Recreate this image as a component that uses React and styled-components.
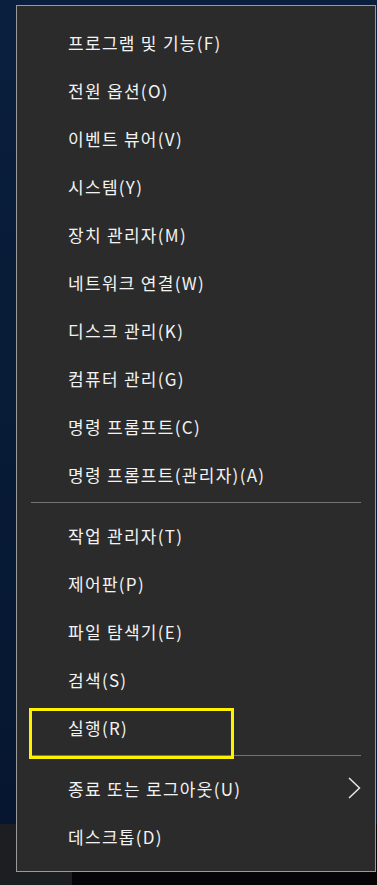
import React from "react"
import styled, { createGlobalStyle } from "styled-components"

const Global = createGlobalStyle`
  html, body {
    margin: 0;
    padding: 0;
    background: #050508;
  }
`

const Screen = styled.div`
  position: relative;
  width: 377px;
  height: 885px;
  overflow: hidden;
  display: flex;
  flex-direction: column;
  font-family: "Noto Sans CJK KR", "Noto Sans", sans-serif;
`

const Desktop = styled.div`
  flex: 1;
  background: linear-gradient(180deg, #0a1f3d 0%, #071a35 60%, #061630 100%);
`

const Taskbar = styled.div`
  height: 61px;
  display: flex;
  background: #050508;
`

const StartTile = styled.div`
  width: 72px;
  background: #1d1e21;
`

const Menu = styled.div`
  position: absolute;
  left: 16px;
  top: 5px;
  width: 358px;
  padding: 12px 0 11px;
  background: #2b2b2b;
  border: 1px solid #9a9a9a;
`

const Row = styled.div`
  position: relative;
  height: 48px;
  display: flex;
  align-items: center;
  justify-content: space-between;
  padding: 0 14px 0 51px;
  color: #f3f3f3;
  font-size: 17px;
  letter-spacing: 1.3px;
`

const Separator = styled.div`
  height: 1px;
  margin: 4px 14px 8px;
  background: #737373;
`

const Highlight = styled.div`
  position: absolute;
  left: 12px;
  top: 5px;
  width: 199px;
  height: 45px;
  border: 3px solid #fff200;
`

const Chevron = () => (
  <svg width="13" height="22" viewBox="0 0 13 22">
    <polyline points="1,1 11.5,11 1,21" fill="none" stroke="#e8e8e8" strokeWidth="1.5" />
  </svg>
)

const groups = [
  [
    "프로그램 및 기능(F)",
    "전원 옵션(O)",
    "이벤트 뷰어(V)",
    "시스템(Y)",
    "장치 관리자(M)",
    "네트워크 연결(W)",
    "디스크 관리(K)",
    "컴퓨터 관리(G)",
    "명령 프롬프트(C)",
    "명령 프롬프트(관리자)(A)",
  ],
  ["작업 관리자(T)", "제어판(P)", "파일 탐색기(E)", "검색(S)", "실행(R)"],
  ["종료 또는 로그아웃(U)", "데스크톱(D)"],
]

export default function App() {
  return (
    <Screen>
      <Global />
      <Desktop />
      <Taskbar>
        <StartTile />
      </Taskbar>
      <Menu>
        {groups.map((items, gi) => (
          <React.Fragment key={gi}>
            {gi > 0 && <Separator />}
            {items.map((label) => (
              <Row key={label}>
                <span>{label}</span>
                {label.startsWith("종료") && <Chevron />}
                {label === "실행(R)" && <Highlight />}
              </Row>
            ))}
          </React.Fragment>
        ))}
      </Menu>
    </Screen>
  )
}
